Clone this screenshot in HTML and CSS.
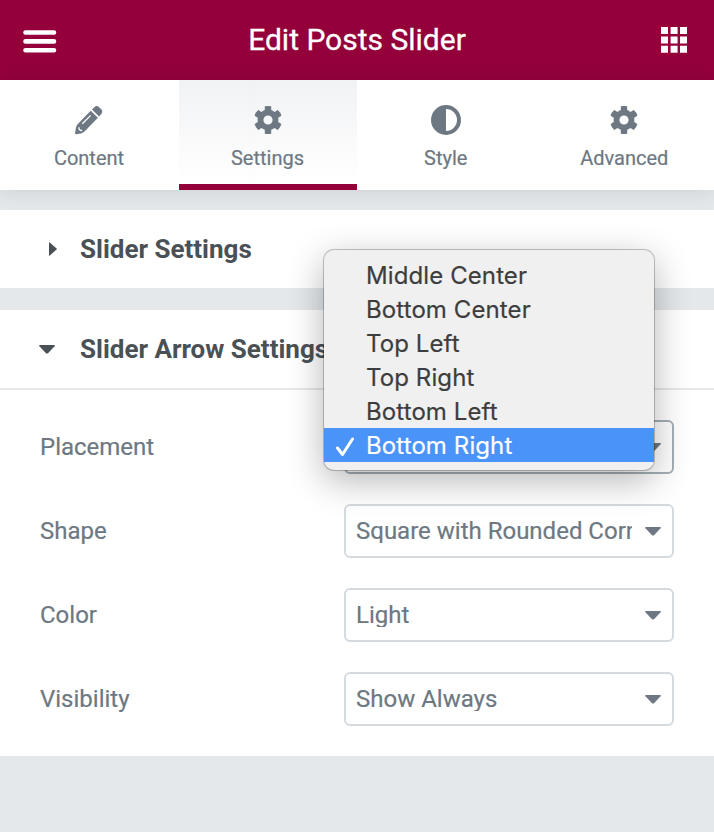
FILE: index.html
```html
<!DOCTYPE html>
<html lang="en">
<head>
<meta charset="utf-8">
<title>Edit Posts Slider</title>
<link rel="stylesheet" href="styles.css">
</head>
<body>
<svg class="symbols" aria-hidden="true">
  <symbol id="gear" viewBox="0 0 28 29">
    <path fill-rule="evenodd" d="M10.8.8Q14 0 17.200.8V4.600Q19 5.200 20.400 6.400L23.800 4.500Q26.600 6.800 27.400 10.200L24.200 12.200Q24.600 14.500 24.200 16.600L27.400 18.600Q26.600 22 23.800 24.400L20.400 22.500Q19 23.700 17.200 24.300V28.200Q14 29 10.800 28.200V24.300Q9 23.700 7.600 22.500L4.200 24.400Q1.400 22 .6 18.600L3.800 16.600Q3.400 14.500 3.800 12.200L.6 10.200Q1.400 6.800 4.200 4.500L7.600 6.400Q9 5.200 10.800 4.600ZM14 9.900A4.600 4.600 0 1 0 14 19.100A4.600 4.600 0 1 0 14 9.900Z"/>
  </symbol>
</svg>
<header class="header">
  <svg class="burger" viewBox="0 0 34 24"><path d="M2.500 2.500h28.500M2.500 11.400h28.500M2.500 20.300h28.500"/></svg>
  <h1 class="title">Edit Posts Slider</h1>
  <svg class="apps" viewBox="0 0 26 26"><path d="M0 0h7v7H0zM9.600 0h7v7h-7zM19 0h7v7h-7zM0 9.400h7v7H0zM9.600 9.400h7v7h-7zM19 9.400h7v7h-7zM0 18.800h7v7H0zM9.600 18.800h7v7h-7zM19 18.800h7v7h-7z"/></svg>
</header>
<nav class="tabs">
  <a class="tab">
    <svg class="icon" viewBox="0 0 30 30"><path d="M16.700 5.700 23.900 12.800 11 26Q9.500 27.600 8 28.200L2.300 29.200Q.9 29.400 1.100 28L1.900 22.800Q2.300 20.600 3.800 19ZM18 4.400 20.600 1.900Q22.600 0 24.900 2L27.200 4.300Q29.300 6.500 27.500 8.800L25.100 11.500Z"/><path class="cut" d="m8.300 18.800 8.400-8.400M4.900 22.200Q4.600 25.700 8.200 25.500"/></svg>
    <span>Content</span>
  </a>
  <a class="tab active">
    <svg class="icon" viewBox="-1 -.5 30 30"><use href="#gear" width="28" height="29"/></svg>
    <span>Settings</span>
  </a>
  <a class="tab">
    <svg class="icon" viewBox="0 0 30 30"><path fill-rule="evenodd" d="M15 0a15 15 0 1 0 0 30a15 15 0 1 0 0-30ZM15 4a11 11 0 0 1 0 22Z"/></svg>
    <span>Style</span>
  </a>
  <a class="tab">
    <svg class="icon" viewBox="-1 -.5 30 30"><use href="#gear" width="28" height="29"/></svg>
    <span>Advanced</span>
  </a>
</nav>
<main class="panel">
  <section class="section">
    <h2 class="heading"><span class="marker"><svg class="caret right" viewBox="0 0 8 14"><path d="M0 .8Q0-.2.8.4L7.600 6.500Q8 7 7.600 7.500L.8 13.600Q0 14.200 0 13.200Z"/></svg></span>Slider Settings</h2>
  </section>
  <section class="section">
    <h2 class="heading open"><span class="marker"><svg class="caret" viewBox="0 0 16 9"><path d="M1 0H15Q16.400.2 15.600 1.200L9 8.200Q8 9 7 8.200L.4 1.200Q-.4.2 1 0Z"/></svg></span>Slider Arrow Settings</h2>
    <div class="controls">
      <div class="row">
        <span class="label">Placement</span>
        <div class="select focus">
          <span class="value"></span>
          <svg class="caret" viewBox="0 0 16 9"><path d="M1 0H15Q16.400.2 15.600 1.200L9 8.200Q8 9 7 8.200L.4 1.200Q-.4.2 1 0Z"/></svg>
          <ul class="menu">
            <li>Middle Center</li>
            <li>Bottom Center</li>
            <li>Top Left</li>
            <li>Top Right</li>
            <li>Bottom Left</li>
            <li class="chosen"><svg class="check" viewBox="0 0 20 20"><path d="m2.500 11 5 6.500L17.500 2"/></svg>Bottom Right</li>
          </ul>
        </div>
      </div>
      <div class="row">
        <span class="label">Shape</span>
        <div class="select">
          <span class="value">Square with Rounded Corners</span>
          <svg class="caret" viewBox="0 0 16 9"><path d="M1 0H15Q16.400.2 15.600 1.200L9 8.200Q8 9 7 8.200L.4 1.200Q-.4.2 1 0Z"/></svg>
        </div>
      </div>
      <div class="row">
        <span class="label">Color</span>
        <div class="select">
          <span class="value">Light</span>
          <svg class="caret" viewBox="0 0 16 9"><path d="M1 0H15Q16.400.2 15.600 1.200L9 8.200Q8 9 7 8.200L.4 1.200Q-.4.2 1 0Z"/></svg>
        </div>
      </div>
      <div class="row">
        <span class="label">Visibility</span>
        <div class="select">
          <span class="value">Show Always</span>
          <svg class="caret" viewBox="0 0 16 9"><path d="M1 0H15Q16.400.2 15.600 1.200L9 8.200Q8 9 7 8.200L.4 1.200Q-.4.2 1 0Z"/></svg>
        </div>
      </div>
    </div>
  </section>
</main>
</body>
</html>
```

FILE: styles.css
```css
* { box-sizing: border-box; }
body {
  margin: 0;
  min-height: 832px;
  background: #e4e8eb;
  color: #6d7882;
  font-family: Roboto, sans-serif;
  overflow: hidden;
}
svg { display: block; fill: currentColor; flex: none; }
.symbols { width: 0; height: 0; position: absolute; }

.header {
  display: flex;
  align-items: center;
  justify-content: space-between;
  height: 80px;
  padding: 0 27px 0 23px;
  background: #93003a;
  color: #fff;
}
.burger { width: 34px; height: 24px; margin-top: 3px; stroke: #fff; stroke-width: 4.600; stroke-linecap: round; }
.title { margin: 0 4px 0 0; font-size: 30px; line-height: 80px; font-weight: 400; -webkit-text-stroke: .3px; }
.apps { width: 26px; height: 26px; }

.tabs {
  display: grid;
  grid-template-columns: 179px 178px 178.500px 178.500px;
  height: 110px;
  background: #fff;
  box-shadow: 0 2px 20px rgba(0, 0, 0, .1);
}
.tab {
  display: flex;
  flex-direction: column;
  align-items: center;
  gap: 11px;
  padding: 25px 1px 0 0;
  font-size: 20px;
  line-height: 24px;
  -webkit-text-stroke: .2px;
}
.tab.active {
  background: linear-gradient(#f1f2f4, #fff);
  border-bottom: 6px solid #93003a;
}
.icon { width: 30px; height: 30px; }
.cut { fill: none; stroke: #fff; stroke-width: 1.300; }

.panel { display: flex; flex-direction: column; gap: 22px; padding-top: 20px; }
.section { background: #fff; }
.heading {
  display: flex;
  align-items: center;
  height: 78px;
  margin: 0;
  color: #495157;
  font-size: 26px;
  font-weight: 700;
}
.heading.open { height: 80px; border-bottom: 2px solid #e4e8eb; }
.marker { display: flex; width: 80px; padding-left: 39px; }
.caret { width: 16px; height: 9px; }
.caret.right { width: 8px; height: 14px; margin-left: 10px; }

.controls { display: flex; flex-direction: column; gap: 30px; padding: 30px 40px; }
.row { display: flex; align-items: center; justify-content: space-between; height: 54px; font-size: 24px; -webkit-text-stroke: .2px; }
.select {
  position: relative;
  display: flex;
  align-items: center;
  justify-content: space-between;
  width: 330px;
  height: 54px;
  padding: 0 11px 0 10px;
  border: 2px solid #d5dadf;
  border-radius: 6px;
}
.select.focus { border-color: #a4afb7; }
.value { width: 276px; height: 24px; line-height: 24px; overflow: hidden; white-space: nowrap; }

.menu {
  position: absolute;
  z-index: 1;
  left: -22px;
  top: -172px;
  width: 330px;
  height: 220px;
  margin: 0;
  padding: 8px 0;
  border-radius: 10px;
  background: #f0f0f0;
  box-shadow: 0 0 0 1px rgba(0, 0, 0, .22), 0 10px 36px rgba(0, 0, 0, .3);
  color: #3d3d3d;
  font-family: Inter, sans-serif;
  font-size: 24px;
  line-height: 36px;
  letter-spacing: .1px;
  list-style: none;
}
.menu li { position: relative; height: 34px; padding-left: 42px; white-space: nowrap; }
.menu .chosen { background: #4a93f8; color: #fff; }
.check { position: absolute; left: 11px; top: 9px; width: 20px; height: 20px; fill: none; stroke: #fff; stroke-width: 3; stroke-linecap: round; stroke-linejoin: round; }
```
